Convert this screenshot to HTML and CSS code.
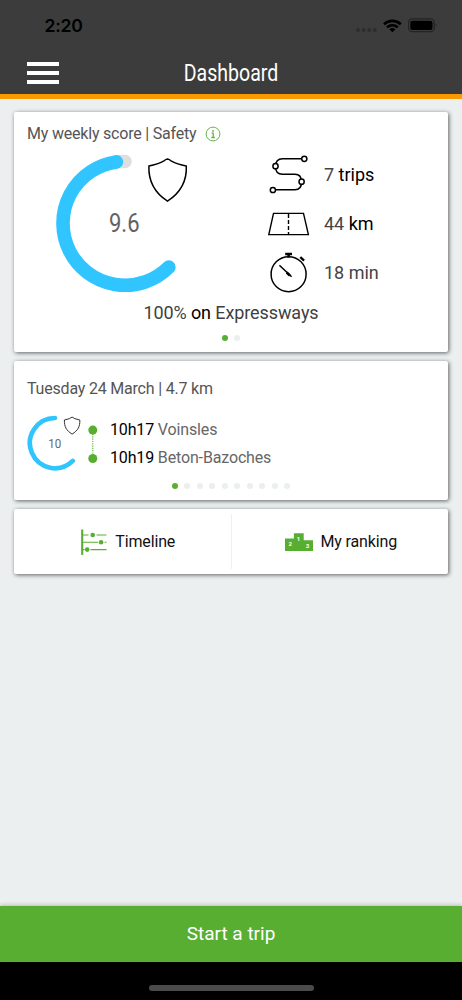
FILE: index.html
```html
<!DOCTYPE html>
<html lang="en">
<head>
<meta charset="utf-8">
<title>Dashboard</title>
<link rel="stylesheet" href="styles.css">
</head>
<body>
<div class="screen">
  <header class="header">
    <div class="status">
      <span class="clock">2:20</span>
      <svg class="status-icons" width="84" height="18" viewBox="354 16 84 18">
        <g fill="#2c2d2c"><circle cx="358" cy="30" r="2"/><circle cx="363.700" cy="30" r="2"/><circle cx="369.200" cy="30" r="2"/><circle cx="374.800" cy="30" r="2"/></g>
        <g fill="none" stroke="#000" stroke-width="2.600"><path d="M384 24.200a12.200 12.200 0 0 1 16.800 0"/><path d="M387 27.400a8 8 0 0 1 10.800 0"/></g>
        <path d="M389.400 29.500a4.400 4.400 0 0 1 6 0L392.400 32.200z"/>
        <rect x="408.600" y="18.900" width="25.600" height="12.800" rx="3.600" fill="none" stroke="#232423" stroke-width="1.200"/>
        <rect x="410.300" y="20.700" width="22.200" height="9.200" rx="2"/>
        <path d="M435.700 23.300q1.700 2 0 4z" fill="#232423"/>
      </svg>
    </div>
    <div class="titlebar">
      <button class="menu" aria-label="Menu"><i></i><i></i><i></i></button>
      <h1 class="title">Dashboard</h1>
    </div>
  </header>
  <main class="content">
    <section class="card score">
      <h2 class="heading"><span>My weekly score | Safety</span>
        <svg width="16" height="16" viewBox="0 0 16 16" fill="none" stroke="#67b548"><circle cx="8" cy="8" r="6.900" stroke-width="1"/><path d="M8 4v1.900M6.600 7.200H8.200v4.300M6.300 11.500h3.600" stroke-width="1.300"/></svg>
      </h2>
      <div class="score-body">
        <svg class="gauge" width="237" height="147" viewBox="27 151 237 147">
          <g fill="none" stroke-width="13.600" stroke-linecap="round">
            <path d="M116.370 161.700A62 62 0 0 1 125 161.500" stroke="#dedede"/>
            <path d="M116.370 161.900A62 62 0 1 0 168.840 267.140" stroke="#30c5ff"/>
          </g>
          <text class="gauge-value" x="109" y="232.200" textLength="30.500" lengthAdjust="spacingAndGlyphs">9.6</text>
          <path d="M167.500 159.100Q165.800 159.200 163.500 161.200Q158 164.200 148.900 166C148.300 181 153.500 192 167.500 201.200C181.500 192 187 181 186.300 166Q177 164.200 171.500 161.200Q169.200 159.200 167.500 159.100Z" fill="none" stroke="#000" stroke-width="1.500" stroke-linejoin="round"/>
        </svg>
        <ul class="stats">
          <li>
            <svg width="50" height="49" viewBox="264 151 50 49" fill="none" stroke="#000" stroke-width="1.500"><path d="M301.500 158.700H282.500Q275.500 158.700 275.500 166.500Q275.500 174.300 282.500 174.300H295Q301.500 174.300 301.500 182Q301.500 189.800 295 189.800H275.500"/><g fill="#fff"><circle cx="304.300" cy="158.800" r="2.600"/><circle cx="275.500" cy="166.200" r="2.600"/><circle cx="301.600" cy="181.700" r="2.600"/><circle cx="272.900" cy="190" r="2.600"/></g></svg>
            <span class="stat"><span>7</span> <b>trips</b></span>
          </li>
          <li>
            <svg width="50" height="49" viewBox="264 200 50 49" fill="none" stroke="#000" stroke-width="1.400"><path d="M273.500 213.400H303.500L308.400 234.600H268.800Z"/><path d="M288.500 214v20.500" stroke-dasharray="4 2"/></svg>
            <span class="stat"><span>44</span> <b>km</b></span>
          </li>
          <li>
            <svg width="50" height="49" viewBox="264 249 50 49" fill="none" stroke="#000" stroke-width="1.500"><circle cx="288.600" cy="274.200" r="17.500"/><path d="M285.200 253.900h6.800M288.600 254v3.500" stroke-width="2.500"/><path d="M300.300 257.200l3.800 3.500" stroke-width="2.300"/><path d="M279.400 265.200l12.200 11.500"/><path d="M286.700 272.500l3.200 3" stroke-width="2.500"/></svg>
            <span class="stat">18 min</span>
          </li>
        </ul>
      </div>
      <p class="roads"><span>100% <b>on</b> Expressways</span></p>
      <div class="dots"><i class="on"></i><i></i></div>
    </section>

    <section class="card trip">
      <h2 class="heading"><span>Tuesday 24 March | 4.7 km</span></h2>
      <div class="trip-body">
        <svg width="83" height="60" viewBox="27 413 83 60">
          <path d="M54.900 418A25.100 25.100 0 1 0 72.700 460.900" fill="none" stroke="#30c5ff" stroke-width="4.700" stroke-linecap="round"/>
          <text class="mini-value" x="48.300" y="447.800" textLength="13" lengthAdjust="spacingAndGlyphs">10</text>
          <path d="M72.100 417.100Q70.300 418.800 64.400 420C64.200 426.500 66.200 430.500 72.100 434.100C78 430.500 80.100 426.500 79.800 420Q73.900 418.800 72.100 417.100Z" fill="none" stroke="#333" stroke-width="1" stroke-linejoin="round"/>
          <path d="M92.800 434v20" stroke="#58ae30" stroke-width="1.100" stroke-dasharray="1.200 1.100"/>
          <g fill="#58ae30"><circle cx="92.800" cy="430.100" r="4.500"/><circle cx="92.800" cy="458.500" r="4.500"/></g>
        </svg>
        <div class="stops">
          <p><span><b>10h17</b> Voinsles</span></p>
          <p><span><b>10h19</b> Beton-Bazoches</span></p>
        </div>
      </div>
      <div class="dots"><i class="on"></i><i></i><i></i><i></i><i></i><i></i><i></i><i></i><i></i><i></i></div>
    </section>

    <nav class="card links">
      <a class="link">
        <svg width="28" height="28" viewBox="81 527 28 28" stroke="#58ae30" fill="#58ae30"><path d="M83.200 528.500v25.400" stroke-width="2.100"/><path d="M84 534h5.500M97.500 534h10M84 541.300h15M105.600 541.300h1.900M84 548.600h1.500M91.500 548.600h16" stroke-width="1.100"/><g stroke="none"><circle cx="93.700" cy="534" r="2.300"/><circle cx="102.100" cy="541.300" r="2.300"/><circle cx="88.200" cy="548.600" r="2.300"/></g></svg>
        <span>Timeline</span>
      </a>
      <a class="link">
        <svg width="28" height="28" viewBox="286 527 28 28"><path d="M286 537.500h8.900v-5.300h9.800v7.100h9.300V550h-28z" fill="#58ae30"/><g class="podium"><text x="291.200" y="544.800">2</text><text x="299.600" y="539.800">1</text><text x="308.500" y="547">3</text></g></svg>
        <span>My ranking</span>
      </a>
    </nav>
  </main>
  <button class="start"><span>Start a trip</span></button>
  <footer class="home"><i></i></footer>
</div>
</body>
</html>
```
FILE: styles.css
```css
* { box-sizing: border-box; }
body, h1, h2, p, ul { margin: 0; padding: 0; }
body { font-family: Roboto, sans-serif; background: #ebeff0; }
svg { display: block; flex: none; }
b { font-weight: 400; color: #000; }
ul { list-style: none; }
button { border: 0; padding: 0; background: none; font: inherit; }
span { white-space: nowrap; }

.screen { width: 462px; height: 1000px; display: flex; flex-direction: column; }

.header { height: 99px; flex: none; background: #3b3c3b; border-bottom: 5px solid #f99b00; }
.status { height: 52px; padding: 0 24px 0 44.5px; display: flex; justify-content: space-between; align-items: center; }
.clock { font: 600 17.6px/20px Inter, sans-serif; letter-spacing: -.3px; color: #000; }
.status-icons { margin-top: -2px; }
.titlebar { height: 42px; padding: 0 27px; display: grid; grid-template-columns: 32px 1fr 32px; align-items: center; }
.menu { display: flex; flex-direction: column; gap: 5px; }
.menu i { height: 4px; width: 31.5px; background: #fff; }
.title { padding-top: 2px; font-size: 23px; line-height: 26px; font-weight: 400; color: #fff; text-align: center; transform: scaleX(.85); }

.content { flex: 1; padding: 13px 14px 0; display: flex; flex-direction: column; gap: 9px; }
.card { background: #fff; border-radius: 2px; box-shadow: 1px 1px 4px rgba(0, 0, 0, .6); }
.score { height: 239.5px; padding: 12px 13px 0; }
.heading { height: 20px; display: flex; align-items: center; gap: 9px; font-size: 16px; line-height: 20px; letter-spacing: -.2px; font-weight: 400; color: #555; }
.score-body { display: flex; margin-top: 7px; }
.gauge-value { font-size: 25.5px; fill: #626262; }
.stats { flex: 1; }
.stats li { height: 49px; display: flex; align-items: center; gap: 10px; }
.stat { font-size: 18px; line-height: 22px; color: #444; padding-bottom: 2px; }
.roads { text-align: center; font-size: 18px; line-height: 22px; letter-spacing: -.1px; color: #3f3f3f; margin-top: 4px; }
.dots { display: flex; justify-content: center; gap: 6.5px; }
.dots i { width: 6px; height: 6px; border-radius: 50%; background: #ebefef; }
.dots i.on { background: #58ae30; }
.score .dots { margin-top: 11px; }

.trip { height: 139.5px; padding: 18px 13px 0; }
.trip-body { display: flex; margin-top: 14px; }
.stops { padding-top: 3px; font-size: 16px; line-height: 28px; letter-spacing: -.15px; color: #666; }
.mini-value { font-size: 13px; fill: #666; }
.trip .dots { margin-top: 10px; }

.links { height: 65px; padding: 5px 0; display: grid; grid-template-columns: 217px 217px; }
.link { display: flex; align-items: center; justify-content: center; gap: 7.5px; font-size: 16px; letter-spacing: -.15px; color: #111; padding-left: 10px; }
.link + .link { border-left: 1px solid #edf0f0; padding-left: 2px; }
.podium { font-size: 6px; letter-spacing: 0; font-weight: 700; fill: #fff; text-anchor: middle; }

.start { height: 56px; padding-bottom: 1px; background: #58ae30; color: #fff; font-size: 19px; box-shadow: 0 -1px 4px rgba(0, 0, 0, .22); }
.home { height: 38px; background: #000; display: flex; justify-content: center; padding-top: 23px; }
.home i { width: 165px; height: 6px; border-radius: 3px; background: #4b4b4b; }
```
